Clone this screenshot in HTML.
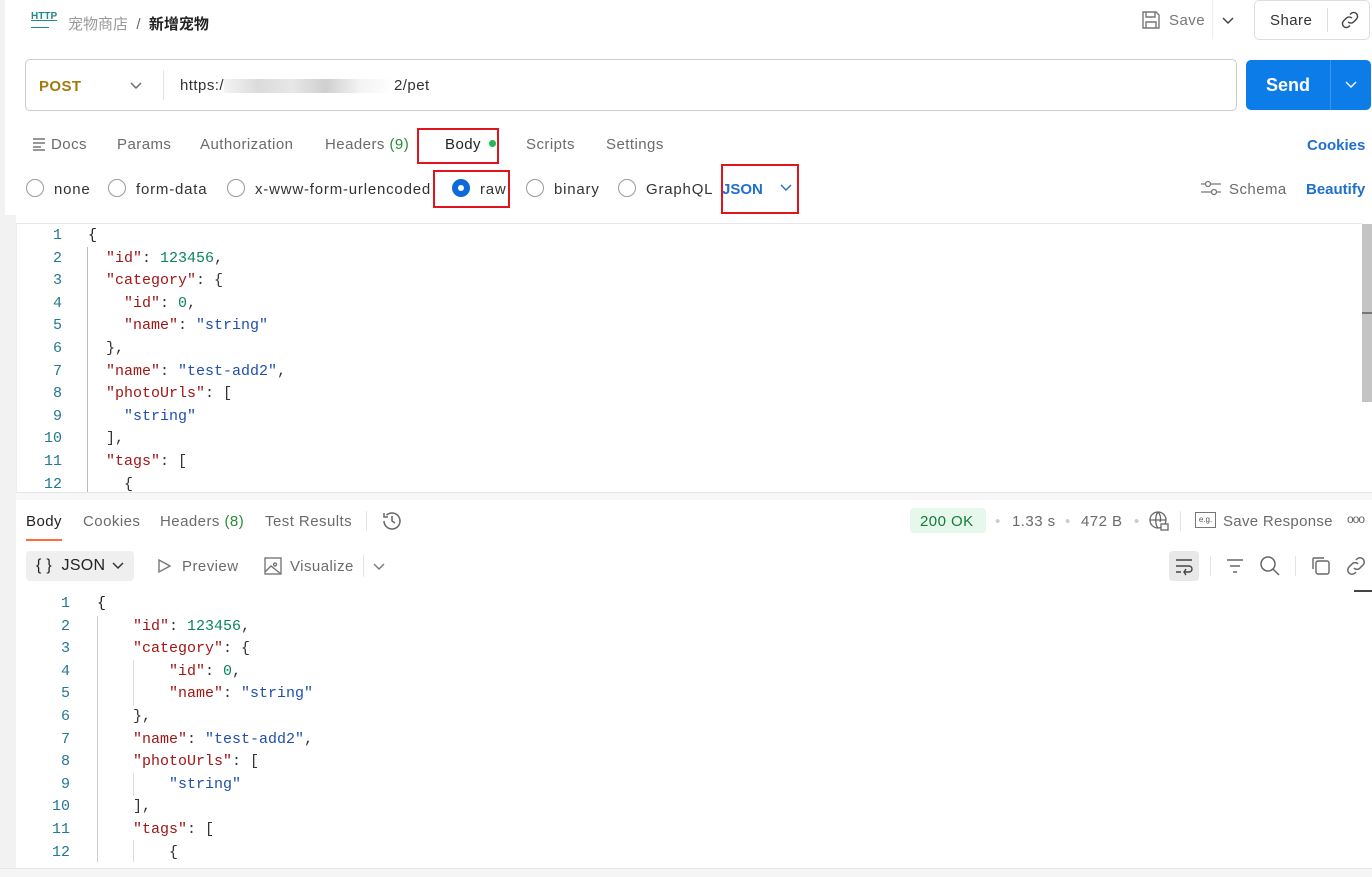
<!DOCTYPE html>
<html><head><meta charset="utf-8"><style>
*{box-sizing:border-box;margin:0;padding:0}
body{width:1372px;height:877px;overflow:hidden;background:#fff;font-family:"Liberation Sans","Noto Sans CJK SC",sans-serif;color:#333;position:relative}
.a{position:absolute}
.t{font-size:15px;color:#6b6b6b;white-space:nowrap;letter-spacing:0.45px;margin-top:1px}
.r{letter-spacing:0.8px}
.code{font-family:"Liberation Mono",monospace;font-size:15px;white-space:pre}
.k{color:#a31515}.s{color:#1f4fb0}.n{color:#098658}.p{color:#222}
.ln{color:#237893;text-align:right;width:30px}
.radio{width:18px;height:18px;border:1.5px solid #999;border-radius:50%}
.red{border:2px solid #e0141e}
</style></head><body>
<div class="a" style="left:0;top:0;width:5px;height:877px;background:#f2f2f2"></div>
<div class="a" style="left:0;top:215px;width:16px;height:655px;background:#f2f2f2"></div>
<!-- header -->
<div class="a" style="left:31px;top:11px;font-size:10px;color:#1f8a8a;font-weight:bold;text-decoration:underline">HTTP</div>
<div class="a" style="left:31px;top:24px;width:18px;height:4px;border-bottom:1.5px solid #1f8a8a"></div>
<div class="a t" style="left:68px;top:12px;color:#999;letter-spacing:0">宠物商店 <span style="color:#666">&nbsp;/&nbsp;</span> <b style="color:#222">新增宠物</b></div>
<svg class="a" style="left:1141px;top:10px" width="20" height="20" viewBox="0 0 20 20" fill="none" stroke="#777" stroke-width="1.4"><path d="M2 2h13l3 3v13H2z"/><path d="M5 2v5h9V2M5 18v-6h10v6"/></svg>
<div class="a t" style="left:1169px;top:11px;color:#777">Save</div>
<div class="a" style="left:1212px;top:0;width:1px;height:39px;background:#eee"></div>
<svg class="a" style="left:1221px;top:14px" width="14" height="14" viewBox="0 0 14 14" fill="none" stroke="#444" stroke-width="1.5"><path d="M2 4l5 5 5-5"/></svg>
<div class="a" style="left:1254px;top:0;width:116px;height:40px;border:1px solid #ddd;border-radius:5px"></div>
<div class="a t" style="left:1270px;top:11px;color:#333">Share</div>
<div class="a" style="left:1327px;top:8px;width:1px;height:24px;background:#ddd"></div>
<svg class="a" style="left:1339px;top:9px" width="22" height="22" viewBox="0 0 24 24" fill="none" stroke="#444" stroke-width="1.6"><path d="M10 14a4 4 0 0 0 6 0l3-3a4 4 0 0 0-6-6l-1 1M14 10a4 4 0 0 0-6 0l-3 3a4 4 0 0 0 6 6l1-1"/></svg>
<!-- url bar -->
<div class="a" style="left:25px;top:59px;width:1212px;height:52px;border:1px solid #ccc;border-radius:5px"></div>
<div class="a" style="left:39px;top:78px;font-size:15px;font-weight:bold;color:#a57a0d;letter-spacing:0.4px">POST</div>
<svg class="a" style="left:129px;top:79px" width="14" height="14" viewBox="0 0 14 14" fill="none" stroke="#666" stroke-width="1.4"><path d="M2 4l5 5 5-5"/></svg>
<div class="a" style="left:163px;top:70px;width:1px;height:30px;background:#e4e4e4"></div>
<div class="a t" style="left:180px;top:76px;color:#333">https:/<span style="display:inline-block;width:170px;height:14px;background:linear-gradient(90deg,#eee,#ccc 20%,#ddd 40%,#bbb 60%,#eee 80%,#fff);vertical-align:middle;opacity:.7"></span>2/pet</div>
<div class="a" style="left:1246px;top:60px;width:125px;height:50px;background:#0c7ce9;border-radius:5px"></div>
<div class="a" style="left:1266px;top:75px;font-size:18px;font-weight:bold;color:#fff">Send</div>
<div class="a" style="left:1330px;top:60px;width:1px;height:50px;background:#3a95ef"></div>
<svg class="a" style="left:1344px;top:78px" width="14" height="14" viewBox="0 0 14 14" fill="none" stroke="#fff" stroke-width="1.4"><path d="M2 4l5 5 5-5"/></svg>
<!-- tabs -->
<svg class="a" style="left:32px;top:137px" width="14" height="14" viewBox="0 0 14 14" stroke="#777" stroke-width="1.4"><path d="M1 2h12M1 6h12M1 10h8M1 13h12"/></svg>
<div class="a t" style="left:51px;top:135px">Docs</div>
<div class="a t" style="left:117px;top:135px">Params</div>
<div class="a t" style="left:200px;top:135px">Authorization</div>
<div class="a t" style="left:325px;top:135px">Headers <span style="color:#2a8a3a">(9)</span></div>
<div class="a t" style="left:445px;top:135px;color:#222">Body</div>
<div class="a" style="left:489px;top:140px;width:7px;height:7px;border-radius:50%;background:#1db954"></div>
<div class="a red" style="left:417px;top:128px;width:82px;height:36px"></div>
<div class="a t" style="left:526px;top:135px">Scripts</div>
<div class="a t" style="left:606px;top:135px">Settings</div>
<div class="a" style="left:1307px;top:137px;font-size:15px;font-weight:bold;color:#1f6fce">Cookies</div>
<!-- body type -->
<div class="a radio" style="left:26px;top:179px"></div><div class="a t r" style="left:54px;top:180px;color:#333">none</div>
<div class="a radio" style="left:108px;top:179px"></div><div class="a t r" style="left:136px;top:180px;color:#333">form-data</div>
<div class="a radio" style="left:227px;top:179px"></div><div class="a t r" style="left:255px;top:180px;color:#333">x-www-form-urlencoded</div>
<div class="a" style="left:452px;top:179px;width:18px;height:18px;border-radius:50%;background:#0c6ad9"><div style="margin:6px;width:6px;height:6px;border-radius:50%;background:#fff"></div></div>
<div class="a t r" style="left:480px;top:180px;color:#333">raw</div>
<div class="a red" style="left:433px;top:170px;width:77px;height:38px"></div>
<div class="a radio" style="left:526px;top:179px"></div><div class="a t r" style="left:554px;top:180px;color:#333">binary</div>
<div class="a radio" style="left:618px;top:179px"></div><div class="a t r" style="left:646px;top:180px;color:#333">GraphQL</div>
<div class="a" style="left:722px;top:181px;font-size:15px;font-weight:bold;color:#1f6fce">JSON</div>
<svg class="a" style="left:779px;top:181px" width="14" height="14" viewBox="0 0 14 14" fill="none" stroke="#1f6fce" stroke-width="1.4"><path d="M2 4l5 5 5-5"/></svg>
<div class="a red" style="left:721px;top:164px;width:78px;height:50px"></div>
<svg class="a" style="left:1200px;top:179px" width="22" height="18" viewBox="0 0 22 18" fill="none" stroke="#777" stroke-width="1.3"><path d="M1 5h20M1 13h20"/><circle cx="8" cy="5" r="2.5" fill="#fff"/><circle cx="14" cy="13" r="2.5" fill="#fff"/></svg>
<div class="a t" style="left:1229px;top:180px">Schema</div>
<div class="a" style="left:1306px;top:181px;font-size:15px;font-weight:bold;color:#1f6fce">Beautify</div>
<!-- request editor -->
<div class="a" style="left:16px;top:223px;width:1346px;height:270px;border-top:1px solid #e6e6e6;border-left:1px solid #eee"></div>
<div class="a" style="left:1362px;top:224px;width:10px;height:268px;background:#fff"></div>
<div class="a" style="left:1362px;top:224px;width:10px;height:178px;background:#c4c4c4"></div>
<div class="a" style="left:1362px;top:312px;width:10px;height:2px;background:#777"></div>
<div class="a" style="left:87px;top:247px;width:1px;height:246px;background:#bbb"></div>
<div class="a code" style="left:32px;top:225px;line-height:22.6px"><div style="display:flex"><div class="ln">1
2
3
4
5
6
7
8
9
10
11
12</div><div style="margin-left:26px"><span class="p">{</span>
  <span class="k">"id"</span>: <span class="n">123456</span>,
  <span class="k">"category"</span>: {
    <span class="k">"id"</span>: <span class="n">0</span>,
    <span class="k">"name"</span>: <span class="s">"string"</span>
  },
  <span class="k">"name"</span>: <span class="s">"test-add2"</span>,
  <span class="k">"photoUrls"</span>: [
    <span class="s">"string"</span>
  ],
  <span class="k">"tags"</span>: [
    {</div></div></div>
<div class="a" style="left:16px;top:492px;width:1356px;height:8px;background:#f7f7f7;border-top:1px solid #e6e6e6"></div>
<!-- response -->
<div class="a t" style="left:26px;top:512px;color:#222">Body</div>
<div class="a" style="left:26px;top:539px;width:36px;height:2px;background:#ff6c37"></div>
<div class="a t" style="left:83px;top:512px">Cookies</div>
<div class="a t" style="left:160px;top:512px">Headers <span style="color:#2a8a3a">(8)</span></div>
<div class="a t" style="left:265px;top:512px">Test Results</div>
<div class="a" style="left:366px;top:511px;width:1px;height:20px;background:#e4e4e4"></div>
<svg class="a" style="left:381px;top:510px" width="22" height="22" viewBox="0 0 22 22" fill="none" stroke="#666" stroke-width="1.5"><path d="M3 11a8 8 0 1 0 2.5-5.8M3 3v4h4M11 6v5l3 2"/></svg>
<div class="a" style="left:910px;top:508px;width:76px;height:25px;background:#e6f8ec;border-radius:4px"></div>
<div class="a t" style="left:920px;top:512px;color:#137a3a">200 OK</div>
<div class="a t" style="left:995px;top:512px;color:#ccc">•</div>
<div class="a t" style="left:1012px;top:512px">1.33 s</div>
<div class="a t" style="left:1065px;top:512px;color:#ccc">•</div>
<div class="a t" style="left:1081px;top:512px">472 B</div>
<div class="a t" style="left:1134px;top:512px;color:#ccc">•</div>
<svg class="a" style="left:1148px;top:510px" width="22" height="22" viewBox="0 0 22 22" fill="none" stroke="#666" stroke-width="1.3"><circle cx="10" cy="10" r="8"/><path d="M2 10h16M10 2c-3 3-3 13 0 16M10 2c3 3 3 8 2 10"/><rect x="13" y="14" width="7" height="6" fill="#fff"/></svg>
<div class="a" style="left:1180px;top:511px;width:1px;height:20px;background:#e4e4e4"></div>
<div class="a" style="left:1195px;top:512px;width:21px;height:16px;border:1.3px solid #777;font-size:8px;color:#555;text-align:center;line-height:13px">e.g.</div>
<div class="a t" style="left:1223px;top:512px;letter-spacing:0.3px">Save Response</div>
<div class="a" style="left:1347px;top:512px;font-size:12px;color:#666;letter-spacing:-1px">ooo</div>
<div class="a" style="left:26px;top:551px;width:108px;height:30px;background:#efefef;border-radius:4px"></div>
<div class="a t" style="left:36px;top:556px;color:#222;font-size:16px;letter-spacing:0.3px">{ }&nbsp; JSON</div>
<svg class="a" style="left:111px;top:559px" width="14" height="14" viewBox="0 0 14 14" fill="none" stroke="#333" stroke-width="1.5"><path d="M2 4l5 5 5-5"/></svg>
<svg class="a" style="left:156px;top:558px" width="16" height="16" viewBox="0 0 16 16" fill="none" stroke="#777" stroke-width="1.4"><path d="M3 2l11 6-11 6z"/></svg>
<div class="a t" style="left:182px;top:557px">Preview</div>
<svg class="a" style="left:263px;top:556px" width="20" height="20" viewBox="0 0 20 20" fill="none" stroke="#777" stroke-width="1.4"><rect x="2" y="2" width="16" height="16"/><path d="M2 16l6-6 10 8M12 7a1.5 1.5 0 1 0 .1 0"/></svg>
<div class="a t" style="left:290px;top:557px">Visualize</div>
<div class="a" style="left:363px;top:555px;width:1px;height:22px;background:#e4e4e4"></div>
<svg class="a" style="left:372px;top:560px" width="14" height="14" viewBox="0 0 14 14" fill="none" stroke="#777" stroke-width="1.4"><path d="M2 4l5 5 5-5"/></svg>
<div class="a" style="left:1169px;top:551px;width:30px;height:30px;background:#e8e8e8;border-radius:4px"></div>
<svg class="a" style="left:1174px;top:556px" width="20" height="20" viewBox="0 0 20 20" fill="none" stroke="#444" stroke-width="1.4"><path d="M2 4h16M2 10h13a3 3 0 0 1 0 6h-5M12 13l-2 3 2 3M2 16h5"/></svg>
<div class="a" style="left:1210px;top:556px;width:1px;height:20px;background:#e4e4e4"></div>
<svg class="a" style="left:1225px;top:557px" width="20" height="18" viewBox="0 0 20 18" stroke="#666" stroke-width="1.4"><path d="M2 3h16M5 9h10M8 15h4"/></svg>
<svg class="a" style="left:1259px;top:555px" width="22" height="22" viewBox="0 0 22 22" fill="none" stroke="#666" stroke-width="1.5"><circle cx="9" cy="9" r="7"/><path d="M14 14l6 6"/></svg>
<div class="a" style="left:1295px;top:556px;width:1px;height:20px;background:#e4e4e4"></div>
<svg class="a" style="left:1310px;top:555px" width="22" height="22" viewBox="0 0 22 22" fill="none" stroke="#666" stroke-width="1.4"><rect x="6" y="6" width="13" height="13" rx="2"/><path d="M3 14V4a1 1 0 0 1 1-1h10"/></svg>
<svg class="a" style="left:1344px;top:554px" width="24" height="24" viewBox="0 0 24 24" fill="none" stroke="#666" stroke-width="1.5"><path d="M10 14a4 4 0 0 0 6 0l3-3a4 4 0 0 0-6-6l-1 1M14 10a4 4 0 0 0-6 0l-3 3a4 4 0 0 0 6 6l1-1"/></svg>
<div class="a" style="left:1354px;top:590px;width:18px;height:2px;background:#444"></div>
<div class="a" style="left:97px;top:616px;width:1px;height:246px;background:#ccc"></div>
<div class="a" style="left:133px;top:660px;width:1px;height:46px;background:#ddd"></div>
<div class="a" style="left:133px;top:773px;width:1px;height:23px;background:#ddd"></div>
<div class="a" style="left:133px;top:840px;width:1px;height:22px;background:#ddd"></div>
<div class="a code" style="left:40px;top:593px;line-height:22.6px"><div style="display:flex"><div class="ln">1
2
3
4
5
6
7
8
9
10
11
12</div><div style="margin-left:27px"><span class="p">{</span>
    <span class="k">"id"</span>: <span class="n">123456</span>,
    <span class="k">"category"</span>: {
        <span class="k">"id"</span>: <span class="n">0</span>,
        <span class="k">"name"</span>: <span class="s">"string"</span>
    },
    <span class="k">"name"</span>: <span class="s">"test-add2"</span>,
    <span class="k">"photoUrls"</span>: [
        <span class="s">"string"</span>
    ],
    <span class="k">"tags"</span>: [
        {</div></div></div>
<div class="a" style="left:0;top:868px;width:1372px;height:9px;background:#f5f5f5;border-top:1px solid #e6e6e6"></div>
</body></html>
